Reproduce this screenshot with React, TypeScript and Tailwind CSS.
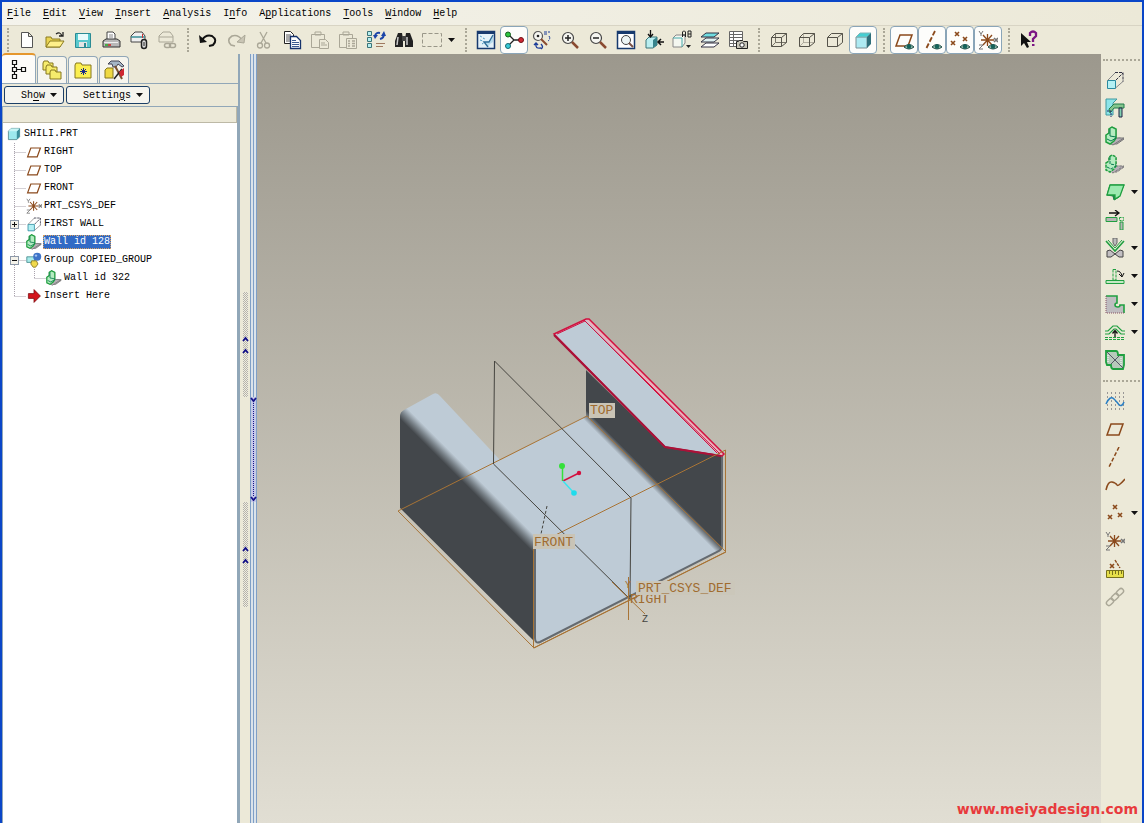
import type { ReactNode } from 'react';

interface IconProps {
  size?: number;
  children: ReactNode;
}

interface Tool {
  label: string;
  icon: ReactNode;
  pressed?: boolean;
  menu?: boolean;
}

function Icon({ size = 20, children }: IconProps) {
  return (
    <svg width={size} height={size} viewBox="0 0 20 20" fill="none" className="block shrink-0" aria-hidden="true">
      {children}
    </svg>
  );
}

const BROWN = '#8b4a1c';
const GREEN = '#20a040';
const GREY = '#aaa797';

const cross = (x: number, y: number, color = BROWN) => (
  <path d={`M${x - 2} ${y - 2}l4 4m0-4l-4 4`} stroke={color} strokeWidth="1.6" />
);

const eye = (
  <>
    <path d="M10 17q5-5 10 0q-5 4-10 0Z" fill="#8fb8a8" stroke="#1f4b45" />
    <circle cx="15" cy="16.5" r="2.2" fill="#14625a" />
  </>
);

const plane = <path d="M6 5h12l-4 11H2Z" stroke={BROWN} strokeWidth="1.5" />;

const csys = (
  <>
    <path d="M3 10h13M5 5l9 10M14 5L5 15M9.500 4v12" stroke={BROWN} strokeWidth="1.3" />
    <path d="M1 1l2 3 2-3M3 4v2M1 15h4l-4 4h4" stroke="#777" />
    {cross(18, 10, '#777')}
  </>
);

const wireBack = <path d="M6.500 3.500v9h11M6.500 12.500l-4 4" stroke="#777468" />;
const wireFront = (
  <>
    <path d="M2.500 7.500h10v9h-10Z" stroke="#55534a" />
    <path d="M2.500 7.500l4-4h11v9l-5 4M12.500 7.500l5-4" stroke="#55534a" />
  </>
);

const flange = (
  <>
    <path d="M8 15l6-3 5 1-7 5-4 0Z" fill="#b9b0b8" stroke="#777" />
    <path d="M1 9l3-2V3l3-2 4 2v9l8 0-8 5-3 2-6-3Z" fill="#b9b0b8" stroke="#777" />
    <path d="M1 9l3-2V3l3-2 4 2v9l-2 3-4 3-4-2Z" fill="#b5ecc0" stroke={GREEN} strokeWidth="1.5" />
    <path d="M5 3v7l6 1M2 13l4 2 5-3" stroke="#087a50" />
  </>
);

const cube = (
  <>
    <path d="M2 6l4-4h12v12l-4 4H2Z" fill="#9de9ee" stroke="#3b7478" />
    <path d="M14 6v12l4-4V2Z" fill="#3b8f9c" />
    <path d="M2 6l4-4h12l-4 4Z" fill="#c8f5f6" />
  </>
);

const shadedCube = (
  <>
    <path d="M3 7h11v11H3Z" fill="#aeeaf2" stroke="#7a8f94" />
    <path d="M3 7l4-4h11l-4 4Z" fill="#45cfd2" stroke="#7fb5b8" />
    <path d="M14 7l4-4v11l-4 4Z" fill="#2f6f7a" />
  </>
);

const extrude = (
  <>
    <path d="M2.500 10.500h8v8h-8Z" fill="#b4f0f4" stroke="#2a8aa0" />
    <path d="M2.500 10.500l8-8M10.500 18l8-7" stroke="#888" />
    <path d="M10 2.500h8v9M11 10l7-7" stroke="#334" strokeDasharray="3 1" />
  </>
);

const lens = (
  <>
    <circle cx="8" cy="8" r="5.500" fill="#f5f5f0" stroke="#444" strokeWidth="1.2" />
    <path d="M12 12l6 6" stroke="#8a4a30" strokeWidth="2.500" />
  </>
);

const fileTools: Tool[] = [
  { label: 'New', icon: <path d="M4.500 2.500h7l4 4v11h-11ZM11.500 2.500v4h4" fill="#fff" stroke="#555" /> },
  {
    label: 'Open',
    icon: (
      <>
        <path d="M1 7h5l1 2h8v8H1Z" fill="#e9d352" stroke="#8a7a20" />
        <path d="M1 17l4-6h14l-4 6Z" fill="#fff08a" stroke="#8a7a20" />
        <path d="M11 4q4-3 6 2M14 6h4V2" stroke="#222" strokeWidth="1.3" />
      </>
    ),
  },
  {
    label: 'Save',
    icon: (
      <>
        <path d="M2.500 3.500h15v14h-15Z" fill="#57c8cd" stroke="#2b8b94" />
        <path d="M5 4h10v6H5Z" fill="#e9fbfb" />
        <path d="M6 12h8v5H6Z" fill="#e4e4e4" />
        <path d="M11 13h2v4h-2Z" fill="#2b8b94" />
      </>
    ),
  },
  {
    label: 'Print',
    icon: (
      <>
        <path d="M6 10V2h6l2 2v6Z" fill="#fff" stroke="#444" />
        <path d="M8 5h4M8 7h4" stroke="#888" />
        <path d="M2 11l3-2h11l3 2v6H2Z" fill="#b8b8b8" stroke="#333" />
        <path d="M3 12.500h14" stroke="#eee" />
        <path d="M4 15h3" stroke="#2a2" strokeWidth="1.500" />
        <path d="M7 15h3" stroke="#c22" strokeWidth="1.500" />
      </>
    ),
  },
  {
    label: 'Send with attachment',
    icon: (
      <>
        <path d="M2 6l4-4h7l3 4v6H2Z" fill="#f0f0f0" stroke="#444" />
        <path d="M2 7h14" stroke="#3a8f98" strokeWidth="1.500" />
        <path d="M13.500 4v4" stroke="#c33" />
        <rect x="12.500" y="9.500" width="5" height="9" rx="2.500" fill="#ddd" stroke="#222" strokeWidth="1.500" />
        <path d="M15 12v4" stroke="#222" />
      </>
    ),
  },
  {
    label: 'Send with link',
    icon: (
      <>
        <path d="M2 6l4-4h7l3 4v6H2ZM2 7h14" stroke={GREY} />
        <rect x="7.500" y="13.500" width="6" height="4" rx="2" stroke={GREY} strokeWidth="1.500" />
        <rect x="12.500" y="13.500" width="6" height="4" rx="2" stroke={GREY} strokeWidth="1.500" />
      </>
    ),
  },
];

const editTools: Tool[] = [
  {
    label: 'Undo',
    icon: (
      <>
        <path d="M4 10q4-6 10-4q6 4 1 9l-4 1" stroke="#111" strokeWidth="2" />
        <path d="M1 5l1 8 7-1Z" fill="#111" />
      </>
    ),
  },
  {
    label: 'Redo',
    icon: (
      <>
        <path d="M16 10q-4-6-10-4q-6 4-1 9l4 1" stroke={GREY} strokeWidth="1.600" />
        <path d="M19 5l-1 8-7-1Z" fill="#c9c5b5" stroke={GREY} />
      </>
    ),
  },
  {
    label: 'Cut',
    icon: (
      <>
        <path d="M6 2l6 11M13 2L7 13" stroke={GREY} strokeWidth="1.300" />
        <circle cx="6" cy="15.500" r="2.500" stroke={GREY} strokeWidth="1.300" />
        <circle cx="13" cy="15.500" r="2.500" stroke={GREY} strokeWidth="1.300" />
      </>
    ),
  },
  {
    label: 'Copy',
    icon: (
      <>
        <path d="M2.500 1.500h6l3 3v9h-9Z" fill="#fff" stroke="#222" />
        <path d="M4 5h5M4 7h6M4 9h6M4 11h4" stroke="#555" />
        <path d="M8.500 6.500h6l4 4v8h-10Z" fill="#fff" stroke="#16336c" strokeWidth="1.300" />
        <path d="M10 10.500h4M10 12.500h7M10 14.500h7M10 16.500h7" stroke="#3b5a90" />
      </>
    ),
  },
  {
    label: 'Paste',
    icon: (
      <>
        <path d="M1.500 4.500h13v13h-13ZM5 5V2h6v3Z" stroke={GREY} />
        <path d="M9.500 9.500h6l3 3v6h-9Z" fill="#ece9d8" stroke={GREY} />
        <path d="M11 13h4M11 15h6" stroke={GREY} />
      </>
    ),
  },
  {
    label: 'Paste Special',
    icon: (
      <>
        <path d="M1.500 4.500h13v13h-13ZM5 5V2h6v3Z" stroke={GREY} />
        <path d="M8.500 8.500h10v10h-10Z" fill="#ece9d8" stroke={GREY} />
        <path d="M10 11h2M14 11h3M10 13.500h2M14 13.500h3M10 16h2M14 16h3" stroke={GREY} strokeWidth="1.300" />
      </>
    ),
  },
  {
    label: 'Regenerate',
    icon: (
      <>
        <path d="M1.500 1.500h4v4h-4ZM1.500 7.500h4v4h-4ZM1.500 13.500h4v4h-4Z" fill="#b7eef0" stroke="#3b7478" />
        <path d="M9 6q1-4 5-3M18 4q0 4-4 5" stroke="#1c45a8" strokeWidth="2" />
        <path d="M7 5h5L9 9ZM15 6l3-5 2 5Z" fill="#1c45a8" />
        <path d="M10 13.500h9M10 16.500h7" stroke="#a07a60" />
      </>
    ),
  },
  {
    label: 'Find',
    icon: (
      <>
        <path d="M4 3h4l1 6v8H1v-6ZM12 3h4l3 8v6h-8V9Z" fill="#222" />
        <path d="M8 6h4v5H8Z" fill="#444" />
        <path d="M4 7l-1 8M13 7v8" stroke="#ccc" strokeWidth="1.500" />
      </>
    ),
  },
  {
    label: 'Select',
    menu: true,
    icon: <path d="M.5 3.500h19v13H.5Z" stroke="#999688" strokeDasharray="4 2" />,
  },
];

const viewTools: Tool[] = [
  {
    label: 'Repaint',
    icon: (
      <>
        <path d="M1.500 1.500h17v17h-17Z" fill="#e3f1f8" stroke="#173a6e" strokeWidth="1.500" />
        <path d="M1 1h18v3H1Z" fill="#173a6e" />
        <path d="M4 6l2 1M7 8l2 1M4 10l3 1M6 14l3-2" stroke="#4d9ac4" strokeDasharray="2 1" />
        <path d="M17 5l-4 6-5 1 4 5 2-3 3-2Z" fill="#b5dced" />
        <path d="M17 5l-4 7-5 0 4 5" stroke="#2f6d98" strokeWidth="1.300" />
      </>
    ),
  },
  {
    label: 'Spin Center',
    pressed: true,
    icon: (
      <>
        <path d="M4 4l6 6-6 6M10 10h6" stroke="#222" strokeWidth="1.300" />
        <circle cx="4" cy="4.500" r="2.500" fill="#2fc63f" stroke="#155c1d" />
        <circle cx="4" cy="16" r="2.500" fill="#38cbd8" stroke="#146870" />
        <circle cx="17" cy="10" r="2.500" fill="#d12a35" stroke="#701015" />
      </>
    ),
  },
  {
    label: 'Orient Mode',
    icon: (
      <>
        <circle cx="6" cy="6" r="4.500" fill="#f5f5f0" stroke="#555" strokeWidth="1.200" />
        <circle cx="6" cy="6" r="1.300" fill="#222" />
        <path d="M9 9l6 6" stroke="#8a4a30" strokeWidth="2" />
        <path d="M12 2h6M12 4h4M17 6q2 3-1 5" stroke="#1c3c98" strokeDasharray="3 1" />
        <path d="M4 14q-1 5 5 4M9 14q3 3 0 5M2 15l2-2 2 2" stroke="#1c3c98" strokeWidth="1.400" />
      </>
    ),
  },
  { label: 'Zoom In', icon: <>{lens}<path d="M5 8h6M8 5v6" stroke="#222" strokeWidth="1.500" /></> },
  { label: 'Zoom Out', icon: <>{lens}<path d="M5 8h6" stroke="#222" strokeWidth="1.500" /></> },
  {
    label: 'Refit',
    icon: (
      <>
        <path d="M1.500 1.500h17v17h-17Z" fill="#fff" stroke="#173a6e" strokeWidth="1.500" />
        <path d="M1 1h18v3H1Z" fill="#173a6e" />
        <circle cx="10" cy="10" r="4.500" fill="#edf5f5" stroke="#444" />
        <path d="M13 13l4 4" stroke="#7a5145" strokeWidth="2" />
      </>
    ),
  },
  {
    label: 'Reorient',
    icon: (
      <>
        <path d="M2 10l3-3h8v8l-4 3H2Z" fill="#b9eef0" stroke="#3b7478" />
        <path d="M9 10v8l4-3V7Z" fill="#37848c" />
        <path d="M6.500 0v6M4 4l2.500 3L9 4" stroke="#111" strokeWidth="1.300" />
        <path d="M20 12h-6M17 9l-3 3 3 3" stroke="#111" strokeWidth="1.500" />
      </>
    ),
  },
  {
    label: 'Saved Views',
    icon: (
      <>
        <path d="M1 8l3-3h9v8l-3 4H1Z" fill="#f4f7f0" stroke="#888" />
        <path d="M1 8h9v9" stroke="#4aa" />
        <path d="M10.500 7V2l1-1h1l1 1v5M11 5h3M16 1v6h3V1h-3M16 4h3" stroke="#222" />
        <path d="M14 15h5l-2.500 3Z" fill="#222" />
      </>
    ),
  },
  {
    label: 'Layers',
    icon: (
      <>
        <path d="M1 17l5-4h13l-5 4Z" fill="#fff" stroke="#334" />
        <path d="M1 12l5-4h13l-5 4Z" fill="#e0f3f3" stroke="#334" />
        <path d="M1 7l5-4h13l-5 4Z" fill="#6fdde0" stroke="#334" />
      </>
    ),
  },
  {
    label: 'View Manager',
    icon: (
      <>
        <path d="M1.500 1.500h13v15h-13ZM5.500 1v15M1 4.500h13M1 7.500h13M1 10.500h13M1 13.500h13" fill="#fff" stroke="#666" />
        <path d="M8.500 11.500h2l1-1h3l1 1h4v7h-11Z" fill="#c7c5b8" stroke="#222" />
        <circle cx="14" cy="15" r="2.200" fill="#fff" stroke="#222" />
      </>
    ),
  },
];

const displayTools: Tool[] = [
  { label: 'Wireframe', icon: <>{wireBack}{wireFront}</> },
  { label: 'Hidden Line', icon: <><g opacity="0.5">{wireBack}</g>{wireFront}</> },
  { label: 'No Hidden', icon: wireFront },
  { label: 'Shading', icon: shadedCube, pressed: true },
];

const datumDisplayTools: Tool[] = [
  { label: 'Show Planes', pressed: true, icon: <>{plane}{eye}</> },
  {
    label: 'Show Axes',
    pressed: true,
    icon: <><path d="M13 1L4 19" stroke={BROWN} strokeWidth="1.800" strokeDasharray="5 2" />{eye}</>,
  },
  { label: 'Show Points', pressed: true, icon: <>{cross(7, 4)}{cross(15, 9)}{cross(3, 13)}{eye}</> },
  { label: 'Show Coordinate Systems', pressed: true, icon: <>{csys}{eye}</> },
];

const helpTools: Tool[] = [
  {
    label: "What's This?",
    icon: (
      <>
        <path d="M2 3v13l3-3 3 5 2-1-2-5h4Z" fill="#111" />
        <path d="M11 6V3q3-3 6 0v3l-3 3v3" stroke="#7b1683" strokeWidth="2.300" />
        <path d="M13 14h2.500v2H13Z" fill="#7b1683" />
      </>
    ),
  },
];

const sheetMetalTools: Tool[] = [
  { label: 'Extrude', icon: extrude },
  {
    label: 'Unattached Wall',
    icon: (
      <>
        <path d="M1 1h11l-4 4v12H1Z" fill="#8de5e9" stroke="#409aa0" />
        <path d="M4 11l5-5h10v4H9l-4 5Z" fill="#84c58d" stroke="#237c4b" />
        <path d="M14 10h3v9h-3Z" fill="#7fd0b0" stroke="#224" />
        <path d="M2 13h4v6" stroke="#226" strokeDasharray="2 1" />
      </>
    ),
  },
  { label: 'Flange Wall', icon: flange },
  { label: 'Extended Flat Wall', icon: <g strokeDasharray="3 1">{flange}</g> },
  {
    label: 'Flat Wall',
    menu: true,
    icon: (
      <>
        <path d="M5 3h14l-5 12-5 3-1-4-6-1Z" fill="#177f48" stroke="#177f48" />
        <path d="M5 3h14l-4 11-5 3 0-4H2Z" fill="#9ceab0" stroke={GREEN} strokeWidth="1.300" />
      </>
    ),
  },
  {
    label: 'Extend',
    icon: (
      <>
        <path d="M4 3h9M10 0l4 3-4 3" stroke="#111" strokeWidth="1.300" />
        <path d="M1 7.500h11v4H1ZM15 12h3v8h-3Z" fill="#b8b5b5" stroke={GREEN} />
        <path d="M14.500 7.500h4v3h-4Z" stroke={GREEN} strokeDasharray="2 1" />
      </>
    ),
  },
  {
    label: 'Bend',
    menu: true,
    icon: (
      <>
        <path d="M8 0h4v5l-2 3-2-3Z" fill="#bbb" stroke="#666" />
        <path d="M1 3l9 10 9-10" stroke={GREEN} strokeWidth="1.600" />
        <path d="M3 2l7 8 7-8" stroke={GREEN} />
        <path d="M2 19v-6l3-1 5 4 5-4 3 1v6h-4l-4-3-4 3Z" fill="#c2bfc2" stroke="#444" />
      </>
    ),
  },
  {
    label: 'Unbend',
    menu: true,
    icon: (
      <>
        <path d="M1 14.500h18v3H1Z" fill="#c5e8c5" stroke={GREEN} />
        <path d="M8 3.500h3V14H8Z" stroke={GREEN} strokeDasharray="3 1" />
        <path d="M12 5q4 0 5 5M14 8l3 3 2-4" stroke="#111" />
      </>
    ),
  },
  {
    label: 'Notch',
    menu: true,
    icon: (
      <>
        <path d="M1 2h11v7q-2 0-2 2t3 2q2 0 2-2h4v8H1Z" fill="#bfbdc0" />
        <path d="M1 2h11v7q-2 0-2 2t3 2q2 0 2-2h4v8" stroke={GREEN} strokeWidth="1.600" />
        <path d="M1 2v17h18" stroke="#856" strokeDasharray="1 1" />
      </>
    ),
  },
  {
    label: 'Form',
    menu: true,
    icon: (
      <>
        <path d="M0 9h3l5-5h4l5 5h3M0 12h4l5-5h2l5 5h4" stroke={GREEN} strokeWidth="1.200" />
        <path d="M10 15V9M7.500 11.500l2.500-3 2.500 3" stroke="#111" strokeWidth="1.300" />
        <path d="M0 15.500h20M0 17.500h20" stroke={GREEN} strokeDasharray="3 1" />
      </>
    ),
  },
  {
    label: 'Flat Pattern',
    icon: (
      <>
        <path d="M1 1h10q2 0 2 4h6v10l-1 4H8q-2 0-2-4H2L1 12Z" fill="#b7cabb" stroke={GREEN} strokeWidth="1.800" />
        <path d="M2 2l16 16M6 14l8-8" stroke="#556" />
        <path d="M3 5v7M16 8v8" stroke="#fff" strokeDasharray="1 1" />
      </>
    ),
  },
];

const datumTools: Tool[] = [
  {
    label: 'Sketch',
    icon: (
      <>
        <path d="M2 2h17M2 6h17M2 10h17M2 14h17M2 18h17" stroke="#445" strokeDasharray="1 3" />
        <path d="M1 13q4-9 8-5t5 6q3 2 5-3" stroke="#2a7fc4" strokeWidth="1.500" />
      </>
    ),
  },
  { label: 'Plane', icon: plane },
  { label: 'Axis', icon: <path d="M14 0L4 20" stroke={BROWN} strokeWidth="1.500" strokeDasharray="4 2" /> },
  { label: 'Curve', icon: <path d="M1 15q2-9 6-8t5 3 8-6" stroke={BROWN} strokeWidth="1.500" /> },
  { label: 'Point', menu: true, icon: <>{cross(10, 4)}{cross(5, 14)}{cross(15, 12)}</> },
  { label: 'Coordinate System', icon: csys },
  {
    label: 'Analysis',
    icon: (
      <>
        {cross(7, 7)}
        <path d="M10 1l5 8" stroke={BROWN} strokeDasharray="3 1" strokeWidth="1.400" />
        <path d="M1.500 11.500h17v7h-17Z" fill="#e6df4a" stroke="#77711c" />
        <path d="M4.500 12v3M7.500 12v4M10.500 12v3M13.500 12v4M16.500 12v3" stroke="#77711c" />
      </>
    ),
  },
  {
    label: 'Reference',
    icon: (
      <g stroke={GREY} strokeWidth="1.400">
        <rect x="-4" y="-2.500" width="8" height="5" rx="2.500" transform="translate(5 15) rotate(-45)" />
        <rect x="-4" y="-2.500" width="8" height="5" rx="2.500" transform="translate(10 10) rotate(-45)" />
        <rect x="-4" y="-2.500" width="8" height="5" rx="2.500" transform="translate(15 5) rotate(-45)" />
      </g>
    ),
  },
];

const menus = ['File', 'Edit', 'View', 'Insert', 'Analysis', 'Info', 'Applications', 'Tools', 'Window', 'Help'];
// Letter that carries the keyboard shortcut, where it is not the first one
const shortcutIndex: Record<string, number> = { Info: 1, Applications: 1 };

function Shortcut({ text, index = 0 }: { text: string; index?: number }) {
  return (
    <span>
      {text.slice(0, index)}
      <span className="underline underline-offset-2">{text[index]}</span>
      {text.slice(index + 1)}
    </span>
  );
}

function Caret() {
  return (
    <svg width="7" height="4" viewBox="0 0 7 4" className="block shrink-0" aria-hidden="true">
      <path d="M0 0h7L3.500 4Z" fill="#111" />
    </svg>
  );
}

function Grip({ first }: { first?: boolean }) {
  return (
    <div className={`flex shrink-0 justify-center ${first ? 'w-[11px]' : 'w-[13px]'}`}>
      <div className="h-6 border-l-2 border-dotted border-[#aaa797]" />
    </div>
  );
}

function ToolGroup({ tools }: { tools: Tool[] }) {
  return (
    <div className="flex">
      {tools.map((tool) => (
        <div key={tool.label} className="flex items-center">
          <button
            type="button"
            aria-label={tool.label}
            aria-pressed={tool.pressed}
            className={`flex h-7 w-7 items-center justify-center ${
              tool.pressed ? 'rounded-sm border border-[#8aa5b8] bg-[#fdfdfb]' : ''
            }`}
          >
            <Icon>{tool.icon}</Icon>
          </button>
          {tool.menu && (
            <button type="button" aria-label={`${tool.label} options`} className="flex h-7 w-[13px] items-center pl-0.5">
              <Caret />
            </button>
          )}
        </div>
      ))}
    </div>
  );
}

function SideTools({ tools }: { tools: Tool[] }) {
  return (
    <div className="flex flex-col">
      {tools.map((tool) => (
        <div key={tool.label} className="flex h-7 items-center">
          <button type="button" aria-label={tool.label} className="flex h-7 w-7 items-center justify-center">
            <Icon>{tool.icon}</Icon>
          </button>
          {tool.menu && (
            <button type="button" aria-label={`${tool.label} options`} className="flex h-7 items-center pl-0.5">
              <Caret />
            </button>
          )}
        </div>
      ))}
    </div>
  );
}

interface TreeItem {
  label: string;
  icon: ReactNode;
  toggle?: '+' | '-';
  selected?: boolean;
  nested?: boolean;
  last?: boolean;
}

const treeItems: TreeItem[] = [
  { label: 'RIGHT', icon: plane },
  { label: 'TOP', icon: plane },
  { label: 'FRONT', icon: plane },
  { label: 'PRT_CSYS_DEF', icon: csys },
  { label: 'FIRST WALL', icon: extrude, toggle: '+' },
  { label: 'Wall id 128', icon: flange, selected: true },
  {
    label: 'Group COPIED_GROUP',
    toggle: '-',
    icon: (
      <>
        <path d="M1 6h10v7H1Z" fill="#a8ecea" stroke="#3b8488" />
        <circle cx="14" cy="6" r="5" fill="#3e74c8" />
        <circle cx="12.500" cy="4.500" r="1.500" fill="#a5c4f0" />
        <path d="M7 11h6l2 4-3 4H9l-3-4Z" fill="#f0d94c" stroke="#7d6d1e" />
      </>
    ),
  },
  { label: 'Wall id 322', icon: flange, nested: true },
  { label: 'Insert Here', last: true, icon: <path d="M3 7h7V2l8 8-8 8v-5H3Z" fill="#d4141c" stroke="#7c1014" /> },
];

function Guide({ end, toggle, trunkOnly }: { end?: boolean; toggle?: '+' | '-'; trunkOnly?: boolean }) {
  return (
    <svg width="20" height="18" viewBox="0 0 20 18" fill="none" className="block shrink-0" aria-hidden="true">
      <path
        d={`M8.500 0v${end ? 9 : 18}${trunkOnly ? '' : 'M8.500 9.500h11'}`}
        stroke="#a9a2ad"
        strokeDasharray="1 1"
      />
      {toggle && (
        <>
          <rect x="4.500" y="5.500" width="8" height="8" fill="#f4f2ea" stroke="#8c98a8" />
          <path d={toggle === '+' ? 'M6 9.500h5M8.500 7v5' : 'M6 9.500h5'} stroke="#111" />
        </>
      )}
    </svg>
  );
}

function ModelTree() {
  return (
    <ul className="flex-1 overflow-hidden bg-white pt-0.5 leading-[18px]">
      <li className="flex h-[18px] items-center gap-[3px] pl-1">
        <Icon size={14}>{cube}</Icon>
        SHILI.PRT
      </li>
      {treeItems.map((item) => (
        <li key={item.label} className="flex h-[18px] items-center pl-[3px]">
          {item.nested && <Guide trunkOnly />}
          <Guide end={item.last || item.nested} toggle={item.toggle} />
          <Icon size={16}>{item.icon}</Icon>
          <span
            className={
              item.selected
                ? 'ml-px h-3.5 border border-dotted border-[#d8a060] bg-[#316ac5] leading-3 text-white'
                : 'ml-0.5'
            }
          >
            {item.label}
          </span>
        </li>
      ))}
    </ul>
  );
}

const tabs = [
  {
    label: 'Model Tree',
    icon: (
      <path
        d="M3.500 1.500h4v4h-4ZM3.500 8.500h4v4h-4ZM3.500 15.500h4v4h-4ZM12.500 8.500h4v4h-4ZM5.500 6v2M5.500 13v2M8 10.500h4"
        stroke="#111"
        strokeWidth="1.200"
      />
    ),
  },
  {
    label: 'Folder Browser',
    icon: (
      <>
        <path d="M1 3l1-2h4l1 2h4v7H1Z" fill="#f6ec6c" stroke="#85761e" />
        <path d="M4 7l1-2h4l1 2h5v7H4Z" fill="#f6ec6c" stroke="#85761e" />
        <path d="M8 12l1-2h4l1 2h5v7H8Z" fill="#f6ec6c" stroke="#85761e" />
      </>
    ),
  },
  {
    label: 'Favorites',
    icon: (
      <>
        <path d="M2 5l1-2h5l1 2h9v13H2Z" fill="#fbef50" stroke="#85761e" />
        <path d="M7 11.500h7M10.500 8v7M8 9l5 5M13 9l-5 5" stroke="#1c2c88" />
      </>
    ),
  },
  {
    label: 'Connections',
    icon: (
      <>
        <path d="M1 10l2-2h6v10H1Z" fill="#efd942" stroke="#85761e" />
        <path d="M4 4l3-3h8l5 5-2 1-4-3-2 3H9L8 4Z" fill="#a5b6c6" stroke="#445" />
        <path d="M11 6l7 13" stroke="#7b5230" strokeWidth="2" />
        <path d="M18 9l-8 10" stroke="#222" strokeWidth="1.500" />
        <path d="M15 12l5-4v7l-3 2Z" fill="#cf2731" />
      </>
    ),
  },
];

function Navigator() {
  return (
    <aside className="flex w-[237px] shrink-0 flex-col border-r border-[#91a7b8] bg-[#ece9d8]">
      <div role="tablist" className="flex h-[30px] items-end gap-px border-b border-[#91a7b8]">
        {tabs.map((tab, i) => (
          <button
            key={tab.label}
            type="button"
            role="tab"
            aria-label={tab.label}
            aria-selected={i === 0}
            className={
              i === 0
                ? 'flex h-[30px] w-[34px] items-center justify-center rounded-t border-t-2 border-r border-t-[#e5972d] border-r-[#91a7b8] bg-[#fcfbf8]'
                : 'flex h-[27px] w-[30px] items-center justify-center rounded-t border border-b-0 border-[#91a7b8] bg-[#f6f5ee]'
            }
          >
            <Icon>{tab.icon}</Icon>
          </button>
        ))}
      </div>
      <div className="flex gap-0.5 px-0.5 py-[2px]">
        <button
          type="button"
          className="flex h-[18px] items-center gap-[5px] rounded-[3px] border border-[#1c3f66] bg-[#f5f4ee] pr-1.5 pl-4"
        >
          <Shortcut text="Show" index={2} />
          <Caret />
        </button>
        <button
          type="button"
          className="flex h-[18px] items-center gap-[5px] rounded-[3px] border border-[#1c3f66] bg-[#f5f4ee] pr-1.5 pl-4"
        >
          <Shortcut text="Settings" index={6} />
          <Caret />
        </button>
      </div>
      <div className="flex flex-1 flex-col border border-b-0 border-[#91a7b8]">
        <div className="h-4 border-r border-b border-[#bdb9a6] bg-[#ece9d8]" />
        <ModelTree />
      </div>
    </aside>
  );
}

function Chevrons({ down }: { down?: boolean }) {
  return (
    <svg width="7" height="6" viewBox="0 0 7 6" fill="none" className="block" aria-hidden="true">
      <path d={down ? 'M1 1l2.500 3L6 1' : 'M1 5l2.500-3L6 5'} stroke="#16128a" strokeWidth="1.800" />
    </svg>
  );
}

function SashHandle() {
  return (
    <div className="flex h-[105px] w-[5px] flex-col items-center gap-1.5 bg-[repeating-conic-gradient(#b5b2ac_0_25%,#efeddf_0_50%)] bg-[length:2px_2px] pt-11">
      <Chevrons />
      <Chevrons />
    </div>
  );
}

function Sash() {
  return (
    <div role="separator" aria-orientation="vertical" className="flex w-[18px] shrink-0 border-l border-[#91a7b8] bg-[#ece9d8]">
      <div className="flex flex-1 flex-col items-center pt-[238px]">
        <SashHandle />
        <div className="h-[105px]" />
        <SashHandle />
      </div>
      <div className="flex w-[7px] flex-col items-center border-x border-[#7f9fc6] bg-[#dbe3ea]">
        <div className="h-[343px] w-px bg-[#7f9fc6]" />
        <div className="flex h-[105px] w-full flex-col items-center justify-between bg-[#c5c9e8]">
          <Chevrons down />
          <div className="w-px flex-1 border-l border-dotted border-[#16128a]" />
          <Chevrons down />
        </div>
        <div className="w-px flex-1 bg-[#7f9fc6]" />
      </div>
    </div>
  );
}

function ModelView() {
  return (
    <svg viewBox="258 54 842 769" className="block h-full w-full" role="img" aria-label="SHILI.PRT">
      <defs>
        <linearGradient id="leftBend" gradientUnits="userSpaceOnUse" x1="400" y1="419" x2="409" y2="410">
          <stop offset="0" stopColor="#43474b" />
          <stop offset="0.5" stopColor="#7c858c" />
          <stop offset="1" stopColor="#becbd6" />
        </linearGradient>
        <linearGradient id="rightBend" gradientUnits="userSpaceOnUse" x1="584" y1="420" x2="590" y2="414">
          <stop offset="0" stopColor="#becbd6" />
          <stop offset="1" stopColor="#43474b" />
        </linearGradient>
      </defs>

      {/* base plate and right wall */}
      <path d="M480 471L586 416V370L665 447L722 455V546Q722 549 719 551L540 642Q535 644 535 638V540Z" fill="url(#rightBend)" />
      <path d="M722 456V546Q722 549 719 551L540 642Q535 644 535 638V545" fill="none" stroke="#646a70" strokeWidth="2" />

      {/* left wall with its flange */}
      <path d="M400 416Q400 412 404 410L433 394Q437 392 440 396L500 460L548 530L533 546V640L400 508Z" fill="url(#leftBend)" />

      {/* selected flange */}
      <path d="M554 334L587 319L722 455L665 447Z" fill="#becbd6" />
      <path d="M586 320L589 319L723 453L721 456Z" fill="#eab0bb" />
      <path d="M554 334L586 319L589 319L724 454L722 456L665 447Z" fill="none" stroke="#d3103f" strokeWidth="1.500" />
      <path d="M557 334L585 321L720 454M584 320L717 453" fill="none" stroke="#d3103f" />
      <path d="M554 335L665 447L721 456" fill="none" stroke="#a81238" strokeWidth="2" />

      {/* datum planes */}
      <g fill="none" stroke="#a87436">
        <path d="M398 511L587 416L726 552L534 648Z" />
        <path d="M533.500 546L725.500 450V552L533.500 648Z" />
      </g>
      <path d="M494.500 361L631 498L630 599L493.500 464Z" fill="none" stroke="#45443f" />
      <path d="M547 506L541 534" stroke="#45443f" strokeDasharray="3 2" />
      <path d="M628.500 577V620M612 582L645 614" stroke="#a87436" />

      {/* spin center */}
      <path d="M562.500 481V467" stroke="#35e03a" strokeWidth="1.500" />
      <path d="M563 481L579 473" stroke="#d3103f" strokeWidth="1.500" />
      <path d="M563 481L574 493" stroke="#39e5ee" strokeWidth="1.500" />
      <circle cx="562" cy="466" r="3" fill="#35e03a" />
      <circle cx="579" cy="473" r="2.200" fill="#d3103f" />
      <circle cx="574" cy="493" r="2.800" fill="#1fdcec" />

      <rect x="589" y="403" width="26" height="15" fill="#c9c4b6" />
      <rect x="533" y="534" width="42" height="15" fill="#c9c4b6" />
      <g fontFamily='"Liberation Mono", monospace' fontSize="13" fill="#a06c30">
        <text x="590" y="414">TOP</text>
        <text x="534" y="546">FRONT</text>
        <text x="630" y="603">RIGHT</text>
        <rect x="636" y="581" width="99" height="14" fill="#cbc7ba" />
        <text x="638" y="592">PRT_CSYS_DEF</text>
        <text x="625" y="588" fontSize="10">Y</text>
      </g>
      <text x="642" y="622" fontFamily='"Liberation Mono", monospace' fontSize="10" fill="#45443f">
        Z
      </text>
    </svg>
  );
}

export default function App() {
  return (
    <div className="flex h-screen flex-col overflow-hidden border-t-2 border-r-2 border-l-2 border-[#0a46c8] bg-[#ece9d8] font-['Liberation_Mono',monospace] text-[10px] text-black">
      <nav className="flex h-6 shrink-0 items-center gap-3 border-b border-[#d8d4c4] bg-linear-to-r from-[#f4f3ec] to-[#ece9d8] pl-[5px]">
        {menus.map((menu) => (
          <button key={menu} type="button">
            <Shortcut text={menu} index={shortcutIndex[menu]} />
          </button>
        ))}
      </nav>

      <div role="toolbar" aria-label="Main" className="flex h-7 shrink-0 items-center">
        <Grip first />
        <ToolGroup tools={fileTools} />
        <Grip />
        <ToolGroup tools={editTools} />
        <Grip />
        <ToolGroup tools={viewTools} />
        <Grip />
        <ToolGroup tools={displayTools} />
        <Grip />
        <ToolGroup tools={datumDisplayTools} />
        <Grip />
        <ToolGroup tools={helpTools} />
      </div>

      <div className="flex min-h-0 flex-1">
        <Navigator />
        <Sash />
        <main className="min-w-0 flex-1 bg-linear-to-b from-[#9c988d] to-[#e1ded3]">
          <ModelView />
        </main>
        <div role="toolbar" aria-label="Sheetmetal" className="relative flex w-[41px] shrink-0 flex-col">
          <div className="flex h-3 items-center px-0.5">
            <div className="w-full border-t-2 border-dotted border-[#aaa797]" />
          </div>
          <SideTools tools={sheetMetalTools} />
          <div className="flex h-[13px] items-center px-0.5">
            <div className="w-full border-t-2 border-dotted border-[#aaa797]" />
          </div>
          <SideTools tools={datumTools} />
          <a
            href="http://www.meiyadesign.com"
            className="absolute right-1 bottom-1 font-['DejaVu_Sans',sans-serif] text-[14px] leading-5 font-bold whitespace-nowrap text-[#e83a3c]"
          >
            www.meiyadesign.com
          </a>
        </div>
      </div>
    </div>
  );
}
